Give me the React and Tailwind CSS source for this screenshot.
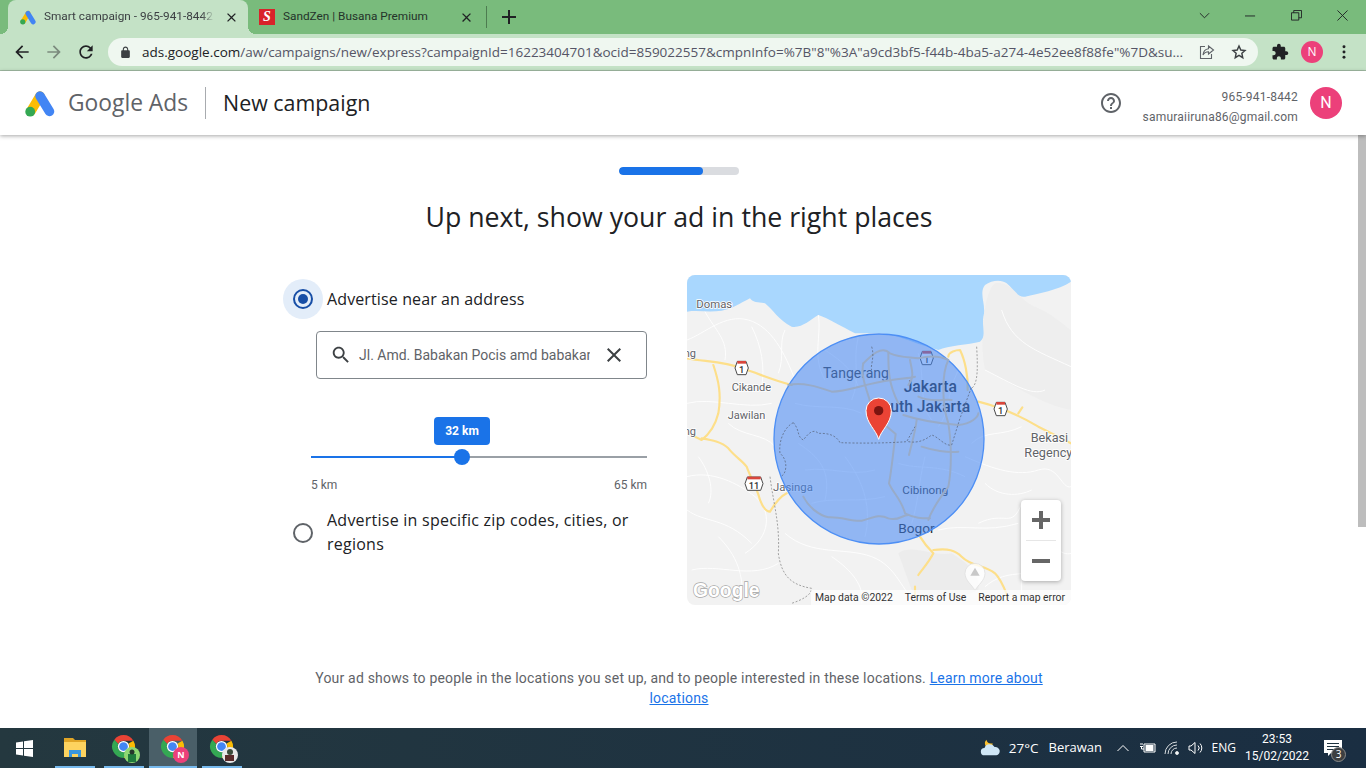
import React from 'react';

const ROBOTO = { fontFamily: 'Roboto, sans-serif' };

const paths = {
  back: 'M20 11H7.83l5.59-5.59L12 4l-8 8 8 8 1.41-1.41L7.83 13H20v-2z',
  forward: 'M12 4l-1.41 1.41L16.17 11H4v2h12.17l-5.58 5.59L12 20l8-8z',
  refresh: 'M17.65 6.35C16.2 4.9 14.21 4 12 4c-4.42 0-7.99 3.58-7.99 8s3.57 8 7.99 8c3.73 0 6.84-2.55 7.73-6h-2.08c-.82 2.33-3.04 4-5.65 4-3.31 0-6-2.69-6-6s2.69-6 6-6c1.66 0 3.14.69 4.22 1.78L13 11h7V4l-2.35 2.35z',
  lock: 'M18 8h-1V6c0-2.76-2.24-5-5-5S7 3.24 7 6v2H6c-1.1 0-2 .9-2 2v10c0 1.1.9 2 2 2h12c1.1 0 2-.9 2-2V10c0-1.1-.9-2-2-2zM9 6c0-1.66 1.34-3 3-3s3 1.34 3 3v2H9V6z',
  puzzle: 'M20.5 11H19V7c0-1.1-.9-2-2-2h-4V3.5C13 2.12 11.88 1 10.5 1S8 2.12 8 3.5V5H4c-1.1 0-1.99.9-1.99 2v3.8H3.5c1.49 0 2.7 1.21 2.7 2.7s-1.21 2.7-2.7 2.7H2V20c0 1.1.9 2 2 2h3.8v-1.5c0-1.49 1.21-2.7 2.7-2.7 1.49 0 2.7 1.21 2.7 2.7V22H17c1.1 0 2-.9 2-2v-4h1.5c1.38 0 2.5-1.12 2.5-2.5S21.88 11 20.5 11z',
  search: 'M15.5 14h-.79l-.28-.27C15.41 12.59 16 11.11 16 9.5 16 5.91 13.09 3 9.5 3S3 5.91 3 9.5 5.91 16 9.5 16c1.61 0 3.09-.59 4.23-1.57l.27.28v.79l5 4.99L20.49 19l-4.99-5zm-6 0C7.01 14 5 11.99 5 9.5S7.01 5 9.5 5 14 7.01 14 9.5 11.99 14 9.5 14z',
  close: 'M19 6.41L17.59 5 12 10.59 6.41 5 5 6.41 10.59 12 5 17.59 6.41 19 12 13.41 17.59 19 19 17.59 13.41 12z',
  help: 'M11 18h2v-2h-2v2zm1-16C6.48 2 2 6.48 2 12s4.48 10 10 10 10-4.48 10-10S17.52 2 12 2zm0 18c-4.41 0-8-3.59-8-8s3.59-8 8-8 8 3.59 8 8-3.59 8-8 8zm0-14c-2.21 0-4 1.79-4 4h2c0-1.1.9-2 2-2s2 .9 2 2c0 2-3 1.75-3 5h2c0-2.25 3-2.5 3-5 0-2.21-1.79-4-4-4z',
};

const Icon = ({ d, className }) => (
  <svg viewBox="0 0 24 24" className={className} fill="currentColor"><path d={d} /></svg>
);

const AdsLogo = ({ className }) => (
  <svg viewBox="0 0 30 27" className={className}>
    <line x1="15" y1="6" x2="6" y2="21" stroke="#fbbc04" strokeWidth="9.5" strokeLinecap="round" />
    <line x1="15" y1="6" x2="24.5" y2="21.5" stroke="#4285f4" strokeWidth="9.5" strokeLinecap="round" />
    <circle cx="5.2" cy="21.7" r="4.9" fill="#34a853" />
  </svg>
);

const ChromeIcon = ({ children }) => (
  <div className="relative w-[26px] h-[26px]">
    <svg viewBox="0 0 24 24" className="w-[25px] h-[25px]">
      <path d="M12 1a11 11 0 0 1 9.53 5.5H12a5.5 5.5 0 0 0-5 3.2L3.2 5.4A11 11 0 0 1 12 1z" fill="#ea4335" />
      <path d="M21.53 6.5A11 11 0 0 1 12 23l4.76-8.25A5.5 5.5 0 0 0 16.8 9.2z" fill="#fbbc04" />
      <path d="M3.2 5.4A11 11 0 0 0 12 23l4.76-8.25A5.5 5.5 0 0 1 7 9.7z" fill="#34a853" />
      <circle cx="12" cy="12" r="5.4" fill="#fff" />
      <circle cx="12" cy="12" r="4.2" fill="#4285f4" />
    </svg>
    {children}
  </div>
);

const TabStrip = () => (
  <div className="relative flex items-end h-[34px] bg-[#79bb7c] pl-2 text-[11.8px] text-[#3c4043]" style={ROBOTO}>
    <div className="relative flex items-center w-[240px] h-[34px] pl-3 pr-[9px] rounded-t-lg bg-[#c4e2c6]">
      <div className="absolute -left-2 bottom-0 w-2 h-2 bg-[radial-gradient(circle_at_0_0,transparent_8px,#c4e2c6_8px)]" />
      <div className="absolute -right-2 bottom-0 w-2 h-2 bg-[radial-gradient(circle_at_100%_0,transparent_8px,#c4e2c6_8px)]" />
      <AdsLogo className="w-[16px] h-[15px] shrink-0" />
      <span className="ml-2 w-[172px] overflow-hidden whitespace-nowrap [mask-image:linear-gradient(to_right,black_92%,transparent)]">Smart campaign - 965-941-8442</span>
      <Icon d={paths.close} className="ml-[9px] w-[15px] h-[15px] text-[#202124]" />
    </div>
    <div className="flex items-center w-[239px] h-[34px] pl-[11px] pr-[9px] border-r border-[#4d7c50] [border-image:linear-gradient(transparent_20%,#4d7c50_20%,#4d7c50_80%,transparent_80%)_1]">
      <div className="flex items-center justify-center w-[16px] h-[16px] shrink-0 bg-[#d9232a] text-white text-[14px] font-bold italic leading-none" style={{ fontFamily: '"Liberation Serif", serif' }}>S</div>
      <span className="ml-2 w-[176px] overflow-hidden whitespace-nowrap text-[#24332a]">SandZen | Busana Premium</span>
      <Icon d={paths.close} className="w-[15px] h-[15px] text-[#202124]" />
    </div>
    <svg viewBox="0 0 14 14" className="ml-[15px] mb-[10px] w-[14px] h-[14px]" stroke="#202124" strokeWidth="2"><path d="M7 0v14M0 7h14" /></svg>
    <div className="flex items-center ml-auto h-[30px] self-start text-[#202124]">
      <svg viewBox="0 0 12 12" className="w-[11px] h-[11px] mr-[35px]" fill="none" stroke="currentColor"><path d="M1 3.5l5 5 5-5" /></svg>
      <svg viewBox="0 0 12 12" className="w-[11px] h-[11px] mr-[35px]" fill="none" stroke="currentColor"><path d="M0 6.5h11" /></svg>
      <svg viewBox="0 0 12 12" className="w-[11px] h-[11px] mr-[35px]" fill="none" stroke="currentColor"><path d="M.5 3h8v8h-8zM3 3V.5h8.5v8H8.5" /></svg>
      <svg viewBox="0 0 12 12" className="w-[11px] h-[11px] mr-[18px]" fill="none" stroke="currentColor"><path d="M.5.5l11 11M11.5.5l-11 11" /></svg>
    </div>
  </div>
);

const Toolbar = () => (
  <div className="flex items-center h-[37px] bg-[#c4e2c6] pl-[12px] border-b border-[#a3bda5]">
    <Icon d={paths.back} className="w-[20px] h-[20px] text-[#202124]" />
    <Icon d={paths.forward} className="ml-[12px] w-[20px] h-[20px] text-[#7b8a7d]" />
    <Icon d={paths.refresh} className="ml-[12px] w-[20px] h-[20px] text-[#202124]" />
    <div className="flex items-center ml-[12px] w-[1150px] h-[28px] pl-[11px] rounded-full bg-[#eff7f0]">
      <Icon d={paths.lock} className="w-[13px] h-[13px] text-[#3c4043]" />
      <span className="ml-[10px] w-[1045px] whitespace-nowrap overflow-hidden text-[13.5px] text-[#556]">
        <span className="text-[#202124]">ads.google.com</span>/aw/campaigns/new/express?campaignId=16223404701&amp;ocid=859022557&amp;cmpnInfo=%7B"8"%3A"a9cd3bf5-f44b-4ba5-a274-4e52ee8f88fe"%7D&amp;su...
      </span>
      <svg viewBox="0 0 16 16" className="ml-[12px] w-[16px] h-[16px]" fill="none" stroke="#5f6368" strokeWidth="1.1"><path d="M6 2.5H1.5v12h11V10M9.5 2l5 4-5 4V7.7C7 7.7 5.2 8.6 4 11c.3-3.500 2.500-6 5.500-6.300z" /></svg>
      <svg viewBox="0 0 24 24" className="ml-[16px] w-[16px] h-[16px]" fill="none" stroke="#3c4043" strokeWidth="2.2"><path d="M12 3l2.700 6 6.300.7-4.700 4.300 1.300 6.500-5.600-3.300-5.600 3.300 1.300-6.500L3 9.700 9.300 9z" /></svg>
    </div>
    <Icon d={paths.puzzle} className="ml-[13px] w-[18px] h-[18px] text-[#202124]" />
    <div className="ml-[12px] flex items-center justify-center w-[22px] h-[22px] rounded-full bg-[#ec407a] text-white text-[12px]">N</div>
    <svg viewBox="0 0 4 16" className="ml-[19px] w-[4px] h-[14px]" fill="#202124"><circle cx="2" cy="2" r="1.700" /><circle cx="2" cy="8" r="1.700" /><circle cx="2" cy="14" r="1.700" /></svg>
  </div>
);

const Header = () => (
  <div className="relative z-10 flex items-center h-[64px] pl-[25px] pr-[24px] bg-white shadow-[0_1px_4px_rgba(0,0,0,0.35)]">
    <AdsLogo className="w-[30px] h-[27px]" />
    <span className="ml-[13px] text-[22.8px] text-[#5f6368]">Google Ads</span>
    <div className="ml-[17px] w-px h-[32px] bg-[#a8abaf]" />
    <span className="ml-[17px] text-[21.4px] text-[#202124]">New campaign</span>
    <Icon d={paths.help} className="ml-auto w-[24px] h-[24px] text-[#5f6368]" />
    <div className="ml-[20px] mt-[8px] text-right text-[12px] leading-[20px] tracking-[0.2px] text-[#5f6368]" style={ROBOTO}>
      <div>965-941-8442</div>
      <div>samuraiiruna86@gmail.com</div>
    </div>
    <div className="ml-[12px] flex items-center justify-center w-[32px] h-[32px] rounded-full bg-[#ec407a] text-white text-[16px]" style={ROBOTO}>N</div>
  </div>
);

const MapLabel = ({ x, y, size = 36, fill = '#5f6368', weight = 400, halo = true, children }) => (
  <text x={x} y={y} fontSize={size} fontWeight={weight} fill={fill} stroke={halo ? '#fff' : 'none'} strokeWidth="5" paintOrder="stroke" style={ROBOTO}>{children}</text>
);

const Shield = ({ x, y, label, w = 38 }) => (
  <g>
    <path d={`M${x - w / 2 + 6} ${y - 20}h${w - 12}l7 20-7 20h-${w - 12}l-7-20z`} fill="#fff" stroke="#4a4a4a" strokeWidth="3" />
    <rect x={x - w / 2 + 6} y={y - 21} width={w - 12} height="8" fill="#d9463c" />
    <text x={x} y={y + 15} fontSize="28" textAnchor="middle" fontWeight="500" fill="#333" style={ROBOTO}>{label}</text>
  </g>
);

// map drawn in the 3x coordinates read from the zoomed crop
const MapCanvas = () => (
  <svg viewBox="6 15 1152 990" className="block w-full h-full">
    <rect x="0" y="0" width="1170" height="1020" fill="#f2f2f2" />
    <path d="M900 300C880 200 900 60 930 40C980 30 1000 90 1050 110C1100 130 1130 160 1158 180V420C1060 400 980 340 900 300z" fill="#eeeeee" />
    <path d="M640 850C680 820 740 860 800 850C850 880 890 920 880 960C820 990 740 1000 680 960z" fill="#ececec" />
    <path d="M6 15V125C40 120 70 128 110 122C140 118 165 100 195 85C205 100 220 95 240 100C265 120 280 150 320 170C350 175 375 150 400 135C430 145 470 170 510 190H590C640 195 700 225 760 240C790 225 850 225 885 215C905 200 890 170 895 140C905 105 880 70 900 45C920 30 950 28 965 40C985 55 1000 85 1020 80C1060 70 1120 60 1158 35V15z" fill="#a9d7fe" />
    <g fill="none" stroke="#fff" strokeWidth="2.500">
      <path d="M6 210C60 190 120 130 190 150S300 250 330 330M200 170C230 230 240 290 230 350M60 125C90 180 130 210 120 270M400 135C410 200 380 260 420 330M520 200C500 280 530 320 500 390M300 180C280 220 300 260 280 310" />
      <path d="M6 400C80 380 180 420 260 400M6 620C80 600 160 640 210 680S260 800 180 850M300 790C380 860 480 830 560 860S650 970 700 1000M840 560C930 600 1000 620 1060 600S1130 660 1158 650M900 300C980 340 1040 380 1080 360M880 760C960 720 980 780 1010 700M340 520C400 560 440 600 420 690M480 560C540 640 560 720 540 800M720 560C700 640 700 700 680 760M820 300C780 380 800 420 760 470" />
      <path d="M950 120C980 220 1050 240 1158 290M6 720C60 760 120 740 200 820M20 900C100 880 200 930 280 880M130 460C170 500 240 490 270 530M330 400C400 420 470 400 530 430M420 240C480 280 500 300 520 350M360 600C440 590 500 620 570 600M640 580C700 600 760 580 840 620M380 700C440 680 520 700 600 680M700 250C720 320 700 400 740 450M860 520C900 480 950 500 1010 470M900 640C940 680 1000 680 1040 660M760 780C840 760 900 790 1000 760M40 560C70 600 90 660 70 700M100 800C140 840 180 900 170 990M440 860C500 900 540 950 530 1000M1010 760V990M1060 800C1100 820 1130 860 1158 850M900 950C960 900 1000 920 1080 900" />
    </g>
    <g fill="none" stroke="#fddf8a" strokeWidth="6.500" strokeLinejoin="round" strokeLinecap="round">
      <path d="M6 265C60 275 120 275 170 295C220 310 260 330 320 345" />
      <path d="M85 285C100 330 110 370 100 430C90 470 70 495 50 510C40 505 20 495 6 490" />
      <path d="M50 505C80 510 110 515 130 535C150 560 170 570 185 590C195 620 215 650 225 690C235 715 245 725 255 725C270 700 285 680 305 670" />
      <path d="M880 395C940 410 1010 440 1060 470C1100 490 1130 505 1158 520M1000 430L1012 412" />
      <path d="M790 260C790 245 815 240 825 240C840 270 850 320 848 360" />
      <path d="M705 800C720 825 735 840 745 850C730 880 710 900 700 915M745 840C790 835 810 840 830 860C860 890 900 885 930 910C950 930 960 960 970 985" />
      <path d="M690 950V975" />
    </g>
    <path d="M875 230C878 290 880 340 860 355" fill="none" stroke="#777" strokeWidth="2" strokeDasharray="6 5" />
    <path d="M255 620C265 700 285 760 280 850C290 920 320 945 380 955C380 975 350 990 320 1000" fill="none" stroke="#777" strokeWidth="2" strokeDasharray="6 5" />
    <path d="M840 910a30 30 0 1 1 60 0c0 22-22 35-30 52c-8-17-30-30-30-52z" fill="#fff" fillOpacity="0.8" stroke="#dcdcdc" strokeWidth="2" />
    <path d="M870 893l14 24h-28z" fill="#c8c8c8" />

    <MapLabel x={34} y={114} size={34}>Domas</MapLabel>
    <MapLabel x={140} y={362} size={33}>Cikande</MapLabel>
    <MapLabel x={128} y={446} size={33}>Jawilan</MapLabel>
    <MapLabel x={-4} y={262} size={33}>ng</MapLabel>
    <MapLabel x={-4} y={495} size={33}>ng</MapLabel>
    <MapLabel x={1037} y={517} size={38}>Bekasi</MapLabel>
    <MapLabel x={1018} y={560} size={38}>Regency</MapLabel>
    <MapLabel x={264} y={662} size={34}>Jasinga</MapLabel>
    <MapLabel x={414} y={323} size={42} fill="#3a3a3a" halo={false}>Tangerang</MapLabel>
    <MapLabel x={656} y={367} size={47} weight={500} fill="#222" halo={false}>Jakarta</MapLabel>
    <MapLabel x={616} y={425} size={47} weight={500} fill="#222" halo={false}>uth Jakarta</MapLabel>
    <MapLabel x={652} y={672} size={35} fill="#3a3a3a" halo={false}>Cibinong</MapLabel>
    <MapLabel x={640} y={790} size={41} fill="#222" halo={false}>Bogor</MapLabel>

    <Shield x={170} y={294} label="1" />
    <Shield x={725} y={264} label="1" />
    <Shield x={947} y={417} label="1" />
    <Shield x={207} y={641} label="11" w={52} />

    <circle cx="582" cy="507" r="315" fill="#4285f4" fillOpacity="0.55" stroke="#4d8ff5" strokeWidth="4" />

    <g fill="none" stroke="#98abc8" strokeWidth="6" strokeLinejoin="round" strokeLinecap="round">
      <path d="M310 345C360 335 410 355 440 365C490 365 540 340 620 330C650 325 670 325 690 320" />
      <path d="M535 280C560 255 590 225 615 250C650 265 680 260 700 265C740 255 770 260 790 270C770 310 770 400 790 460C800 520 800 600 790 650C760 690 740 720 730 750" />
      <path d="M610 250C610 300 610 340 640 400M675 270C680 300 690 320 670 345M535 280C525 320 550 370 555 395" />
      <path d="M655 435C700 450 760 460 820 465C860 462 880 440 880 430M700 380C740 400 780 385 800 390" />
      <path d="M600 465L632 492C625 540 620 600 612 640C625 670 650 690 660 730C690 745 710 745 735 745M710 530C740 540 790 550 820 545M695 450C690 490 680 520 672 555" />
      <path d="M355 680C370 710 400 735 430 742C470 740 500 755 530 752C560 745 580 730 610 745C640 755 650 735 670 735" />
    </g>
    <path d="M325 458C300 470 280 510 285 550C310 570 305 610 290 618M325 458C345 480 335 500 355 510C370 490 385 475 400 490C420 490 450 490 465 518C520 520 600 520 665 515L690 470M670 515C700 520 720 510 740 495C760 500 780 530 800 525L825 445L860 350M560 230C570 260 555 290 560 300" fill="none" stroke="#5f6f8a" strokeWidth="2.500" strokeDasharray="6 5" />

    <path d="M581 508C574 480 543 460 543 422a38 38 0 1 1 76 0c0 38-31 58-38 86z" fill="#ea4335" stroke="#fff" strokeWidth="3" />
    <circle cx="581" cy="422" r="14" fill="#7b1410" />

    <text x="24" y="982" fontSize="58" fontWeight="700" fill="#fff" stroke="#a5a5a5" strokeWidth="4" paintOrder="stroke" style={{ fontFamily: '"Liberation Sans", sans-serif' }}>Google</text>
  </svg>
);

const MapPanel = () => (
  <div className="relative w-[384px] h-[330px] rounded-lg overflow-hidden">
    <MapCanvas />
    <div className="absolute right-[10px] bottom-[24px] flex flex-col items-center w-[40px] h-[81px] bg-white rounded-sm shadow-[0_1px_4px_rgba(0,0,0,0.3)]">
      <svg viewBox="0 0 18 18" className="mt-[11px] w-[18px] h-[18px]" fill="#666"><path d="M7 0h4v7h7v4h-7v7H7v-7H0V7h7z" /></svg>
      <div className="mt-[11px] w-[30px] h-px bg-[#e6e6e6]" />
      <div className="mt-[18px] w-[18px] h-[4px] bg-[#666]" />
    </div>
    <div className="absolute right-0 bottom-0 flex gap-[12px] h-[15px] pl-[4px] pr-[6px] items-center bg-white/70 text-[10.4px] text-[#333] whitespace-nowrap" style={ROBOTO}>
      <span>Map data ©2022</span>
      <span>Terms of Use</span>
      <span>Report a map error</span>
    </div>
  </div>
);

const LocationForm = () => (
  <div className="w-[364px] text-[#202124]">
    <div className="flex items-center h-[40px] mt-[4px]">
      <div className="flex items-center justify-center w-[40px] h-[40px] rounded-full bg-[#e3edf9]">
        <div className="flex items-center justify-center w-[20px] h-[20px] rounded-full border-2 border-[#174ea6]">
          <div className="w-[10px] h-[10px] rounded-full bg-[#174ea6]" />
        </div>
      </div>
      <span className="ml-[4px] text-[16px] leading-[38px] font-medium tracking-[0.12px] whitespace-nowrap">Advertise near an address</span>
    </div>
    <div className="flex items-center ml-[33px] mt-[12px] w-[331px] h-[48px] pl-[13px] border border-[#80868b] rounded">
      <Icon d={paths.search} className="w-[22px] h-[22px] text-[#3c4043]" />
      <span className="ml-[7px] w-[231px] overflow-hidden whitespace-nowrap text-[14px] text-[#5f6368]" style={ROBOTO}>Jl. Amd. Babakan Pocis amd babakan pocis</span>
      <Icon d={paths.close} className="ml-[12px] w-[24px] h-[24px] text-[#3c4043]" />
    </div>
    <div className="relative ml-[28px] mt-[38px] w-[336px]" style={ROBOTO}>
      <div className="ml-[123px] flex items-center justify-center w-[56px] h-[28px] rounded bg-[#1a73e8] text-white text-[12px] font-bold">32 km</div>
      <div className="flex items-center mt-[11px] h-[2px] bg-[#9aa0a6]">
        <div className="w-[151px] h-[2px] bg-[#1a73e8]" />
      </div>
      <div className="absolute left-[143px] top-[32px] w-[16px] h-[16px] rounded-full bg-[#1a73e8]" />
      <div className="flex justify-between mt-[18px] text-[12px] text-[#5f6368]">
        <span>5 km</span>
        <span>65 km</span>
      </div>
    </div>
    <div className="flex mt-[15px]">
      <div className="flex items-center justify-center w-[40px] h-[48px]">
        <div className="w-[20px] h-[20px] rounded-full border-2 border-[#5f6368]" />
      </div>
      <span className="ml-[4px] w-[320px] text-[16px] leading-[24px] font-medium tracking-[0.24px] -mt-px">Advertise in specific zip codes, cities, or regions</span>
    </div>
  </div>
);

const Content = () => (
  <div className="flex flex-1 min-h-0 overflow-hidden">
    <div className="flex flex-col items-center w-[1358px] bg-white">
      <div className="mt-[32px] w-[120px] h-[8px] rounded-full bg-[#dadce0] overflow-hidden">
        <div className="w-[84px] h-[8px] rounded-full bg-[#1a73e8]" />
      </div>
      <h1 className="mt-[22px] text-[26.7px] leading-[40px] text-[#202124]">Up next, show your ad in the right places</h1>
      <div className="flex self-start ml-[283px] mt-[38px] gap-[40px]">
        <LocationForm />
        <MapPanel />
      </div>
      <p className="mt-[63px] w-[740px] text-center text-[14px] leading-[20px] tracking-[0.19px] text-[#5f6368]" style={ROBOTO}>
        Your ad shows to people in the locations you set up, and to people interested in these locations. <span className="text-[#1a73e8] underline">Learn more about locations</span>
      </p>
    </div>
    <div className="w-[8px] bg-white">
      <div className="h-[392px] bg-[#bdbdbd]" />
    </div>
  </div>
);

const TaskSlot = ({ children, active, wide }) => (
  <div className={`flex items-center justify-center h-[40px] border-b-2 border-[#76b9ed] ${wide ? 'w-[48px]' : 'w-[40px]'} ${active ? 'bg-[#4a5f68]' : ''}`}>
    {children}
  </div>
);

const Taskbar = () => (
  <div className="flex items-center h-[40px] bg-gradient-to-r from-[#24383f] to-[#1a2e42] text-white">
    <svg viewBox="0 0 17 17" className="ml-[16px] w-[17px] h-[17px]" fill="#fff"><path d="M0 2.500l7-1v6.500H0zM8 1.300L17 0v8H8zM0 9h7v6.500l-7-1zM8 9h9v8l-9-1.300z" /></svg>
    <div className="flex ml-[22px]">
      <TaskSlot>
        <svg viewBox="0 0 22 20" className="w-[22px] h-[20px]">
          <path d="M0 1h9l2 2h11v5H0z" fill="#e0a526" />
          <rect y="5" width="22" height="15" fill="#fdd35f" />
          <path d="M5 20v-7h12v7h-3v-3H8v3z" fill="#3a96dd" />
        </svg>
      </TaskSlot>
      <div className="w-[9px]" />
      <TaskSlot>
        <ChromeIcon>
          <svg viewBox="0 0 16 16" className="absolute -right-[3px] -bottom-[3px] w-[16px] h-[16px]">
            <circle cx="8" cy="8" r="8" fill="#8ed873" />
            <rect x="4" y="7" width="8" height="8" fill="#1f7a3d" />
            <circle cx="8" cy="5" r="2.500" fill="#26372c" />
          </svg>
        </ChromeIcon>
      </TaskSlot>
      <div className="w-[5px]" />
      <TaskSlot active wide>
        <ChromeIcon>
          <div className="absolute -right-[3px] -bottom-[3px] flex items-center justify-center w-[16px] h-[16px] rounded-full bg-[#ec407a] text-[9px] font-bold">N</div>
        </ChromeIcon>
      </TaskSlot>
      <div className="w-[5px]" />
      <TaskSlot>
        <ChromeIcon>
          <svg viewBox="0 0 16 16" className="absolute -right-[3px] -bottom-[3px] w-[16px] h-[16px]">
            <circle cx="8" cy="8" r="8" fill="#e8e8e8" />
            <rect x="3" y="8" width="9" height="6" fill="#5a2a2a" />
            <circle cx="8" cy="5" r="3" fill="#3a4a3a" />
          </svg>
        </ChromeIcon>
      </TaskSlot>
    </div>
    <div className="flex items-center ml-auto">
      <svg viewBox="0 0 24 20" className="w-[22px] h-[20px]">
        <path d="M8 1a6 6 0 0 0 1 9 6 6 0 0 0 6-5A6 6 0 0 1 8 1z" fill="#fbc02d" />
        <path d="M6 18a4 4 0 0 1 0-8 6 6 0 0 1 11-1 4.500 4.500 0 0 1 2 9z" fill="#cfe6f5" />
      </svg>
      <span className="ml-[8px] text-[13.5px]">27°C</span>
      <span className="ml-[10px] text-[13px] w-[52px] whitespace-nowrap">Berawan</span>
      <svg viewBox="0 0 12 8" className="ml-[16px] w-[12px] h-[8px]" fill="none" stroke="#fff"><path d="M.5 7L6 1.500 11.500 7" /></svg>
      <svg viewBox="0 0 16 12" className="ml-[11px] w-[16px] h-[12px]" fill="none" stroke="#fff"><path d="M4 2h11v8H4zM0 2h3M0 4.500h3M1.500 4.500V7H4" /><rect x="6" y="3.500" width="7" height="5" fill="#fff" /></svg>
      <svg viewBox="0 0 16 14" className="ml-[8px] w-[16px] h-[14px]" fill="none" stroke="#d8dde0"><path d="M1 13A12 12 0 0 1 13 1M4 13a9 9 0 0 1 9-9M7 13a6 6 0 0 1 6-6" /><circle cx="13" cy="12" r="1.500" fill="#fff" /></svg>
      <svg viewBox="0 0 16 14" className="ml-[8px] w-[16px] h-[14px]" fill="none" stroke="#fff"><path d="M1 5v4h2l4 3.500V1.500L3 5zM10 4.500a3.500 3.500 0 0 1 0 5M12 2.500a6.500 6.500 0 0 1 0 9" /></svg>
      <span className="ml-[8px] text-[12px]">ENG</span>
      <div className="ml-[9px] w-[64px] text-center text-[12px] leading-[17px]" style={ROBOTO}>
        <div>23:53</div>
        <div>15/02/2022</div>
      </div>
      <div className="relative ml-[15px] mr-[24px] w-[18px] h-[16px]">
        <svg viewBox="0 0 18 16" className="w-[18px] h-[16px]" fill="#fff"><path d="M0 0h18v13H7l-3 3v-3H0z" /><path d="M3 3.500h12M3 6.500h12M3 9.500h8" stroke="#1f3340" /></svg>
        <div className="absolute -right-[4px] -bottom-[6px] flex items-center justify-center w-[15px] h-[15px] rounded-full bg-[#3c3f41] border border-[#8a8a8a] text-[10px]">3</div>
      </div>
    </div>
  </div>
);

const App = () => (
  <div className="flex flex-col w-[1366px] h-screen overflow-hidden bg-white" style={{ fontFamily: '"Open Sans", sans-serif' }}>
    <TabStrip />
    <Toolbar />
    <Header />
    <Content />
    <Taskbar />
  </div>
);

export default App;
